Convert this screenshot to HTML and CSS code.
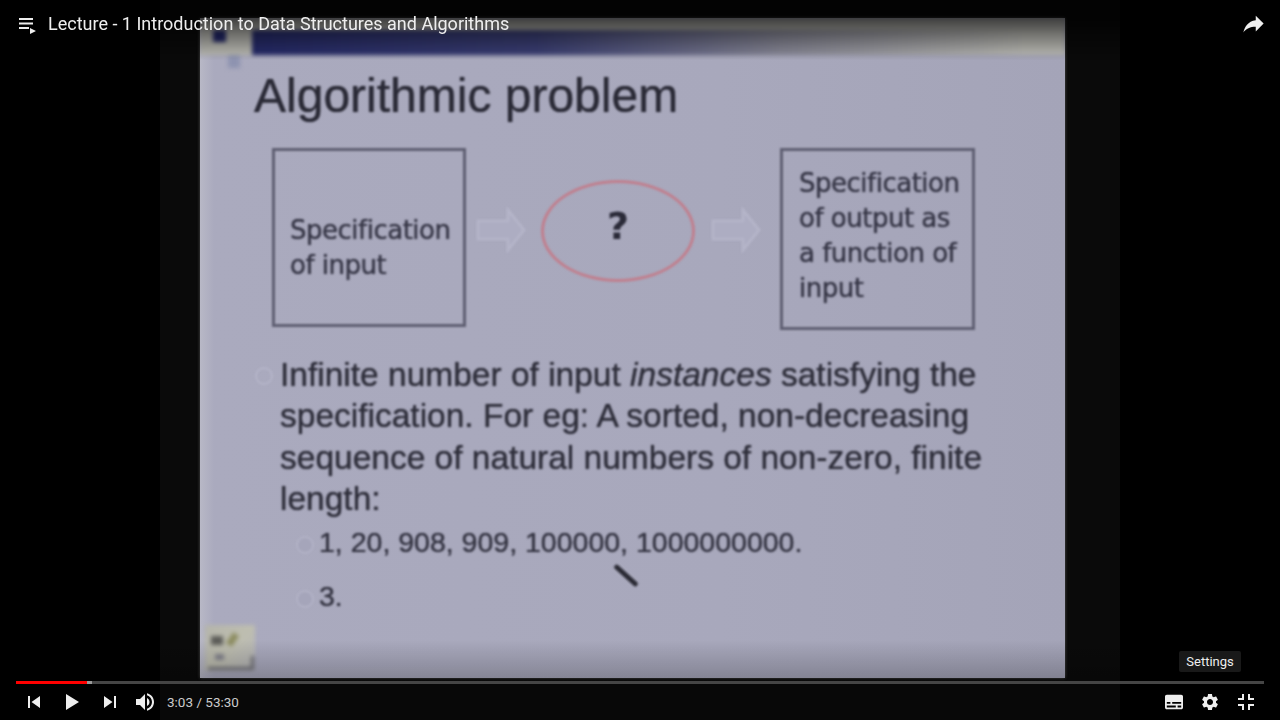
FILE: index.html
```html
<!DOCTYPE html>
<html>
<head>
    <title>Lecture - 1 Introduction to Data Structures and Algorithms</title>
    <link rel="stylesheet" href="styles.css">
</head>
<body>
    <div class="player">
        <div class="videoFrame">
            <div class="slide">
                <div class="slideHeader">
                    <span class="headerSquare"></span>
                    <span class="headerBand"></span>
                    <span class="headerDot"></span>
                </div>
                <div class="slideInner">
                    <h1 class="slideTitle">Algorithmic problem</h1>
                    <div class="diagram">
                        <div class="specBox inputBox">Specification<br>of input</div>
                        <svg class="hollowArrow" viewBox="0 0 50 46"><path d="M2 14h30V3l16 20-16 20V32H2z"/></svg>
                        <div class="oval"><span class="ovalMark">?</span></div>
                        <svg class="hollowArrow" viewBox="0 0 50 46"><path d="M2 14h30V3l16 20-16 20V32H2z"/></svg>
                        <div class="specBox outputBox">Specification<br>of output as<br>a function of<br>input</div>
                    </div>
                    <div class="point">
                        <span class="bullet"></span>
                        <p>Infinite number of input <em>instances</em> satisfying the<br>specification. For eg: A sorted, non-decreasing<br>sequence of natural numbers of non-zero, finite<br>length:</p>
                    </div>
                    <div class="subPoint firstSub"><span class="subBullet"></span><p>1, 20, 908, 909, 100000, 1000000000.</p></div>
                    <div class="subPoint"><span class="subBullet"></span><p>3.</p></div>
                </div>
                <div class="slideLogo">
                    <span class="logoDark"></span>
                    <span class="logoLeaf"></span>
                    <span class="logoSpot"></span>
                    <span class="logoFoot"></span>
                </div>
                <span class="penTip"></span>
            </div>
        </div>

        <div class="shadeTop"></div>
        <div class="shadeBottom"></div>

        <div class="topBar">
            <svg class="playlistIcon" viewBox="0 0 18 16"><path d="M0 0h14v2H0zM0 4.500h14v2H0zM0 9h10v2H0zM11 10l6 3-6 3z"/></svg>
            <span class="videoTitle">Lecture - 1 Introduction to Data Structures and Algorithms</span>
            <svg class="shareIcon" viewBox="0 0 24 24"><path d="M14 9V5l7 7-7 7v-4.100c-5 0-8.500 1.600-11 5.100 1-5 4-10 11-11z"/></svg>
        </div>

        <div class="tooltip">Settings</div>

        <div class="controls">
            <div class="progress">
                <div class="progressPlayed"></div>
                <div class="progressLoaded"></div>
            </div>
            <div class="controlRow">
                <div class="transport">
                    <svg class="ctrl" viewBox="0 0 36 36"><path d="M12 12h2v12h-2zM15.500 18l8.500 6V12z"/></svg>
                    <svg class="ctrl" viewBox="0 0 36 36"><path d="M12 26l6.500-4V14L12 10zM18.500 22L25 18l-6.500-4z"/></svg>
                    <svg class="ctrl" viewBox="0 0 36 36"><path d="M12 24l8.500-6L12 12zM22 12v12h2V12z"/></svg>
                </div>
                <svg class="ctrl" viewBox="0 0 36 36"><path d="M8 21h4l5 5V10l-5 5H8zM19 14v8c1.480-.680 2.500-2.230 2.500-4 0-1.740-1.020-3.260-2.500-4z"/><path d="M19 11.290c2.890.860 5 3.540 5 6.710s-2.110 5.850-5 6.710v2.060c4.010-.910 7-4.490 7-8.770s-2.990-7.860-7-8.770z"/></svg>
                <span class="timeText">3:03 / 53:30</span>
                <span class="spacer"></span>
                <svg class="ctrl" viewBox="-8 -8 40 40"><path d="M20 4H4c-1.100 0-2 .9-2 2v12c0 1.100.9 2 2 2h16c1.100 0 2-.9 2-2V6c0-1.100-.9-2-2-2zM4 12h4v2H4zm10 6H4v-2h10zm6 0h-4v-2h4zm0-4H10v-2h10z"/></svg>
                <svg class="ctrl" viewBox="-9.500 -9.500 43 43"><path d="M19.140 12.940c.04-.3.06-.61.06-.94 0-.32-.02-.64-.07-.94l2.030-1.580c.18-.14.23-.41.12-.61l-1.920-3.320c-.12-.22-.37-.29-.59-.22l-2.390.96c-.5-.38-1.030-.7-1.620-.94l-.36-2.540c-.04-.24-.24-.41-.48-.41h-3.840c-.24 0-.43.17-.47.41l-.36 2.540c-.59.24-1.130.57-1.620.94l-2.390-.96c-.22-.08-.47 0-.59.22L2.740 8.870c-.12.21-.08.47.12.61l2.030 1.580c-.05.3-.09.63-.09.94s.02.64.07.94l-2.030 1.580c-.18.14-.23.41-.12.61l1.920 3.320c.12.22.37.29.59.22l2.390-.96c.5.38 1.030.7 1.620.94l.36 2.540c.05.24.24.41.48.41h3.840c.24 0 .44-.17.47-.41l.36-2.540c.59-.24 1.130-.56 1.620-.94l2.390.96c.22.08.47 0 .59-.22l1.920-3.320c.12-.22.07-.47-.12-.61l-2.010-1.580zM12 15.600c-1.980 0-3.600-1.620-3.600-3.600s1.620-3.600 3.600-3.600 3.600 1.620 3.600 3.600-1.620 3.600-3.600 3.600z"/></svg>
                <svg class="ctrl" viewBox="0 0 36 36"><path d="M14 14h-4v2h6v-6h-2zM22 14v-4h-2v6h6v-2zM20 26h2v-4h4v-2h-6zM10 22h4v4h2v-6h-6z"/></svg>
            </div>
        </div>
    </div>
</body>
</html>
```
FILE: styles.css
```css
html, body {
    margin: 0;
    padding: 0;
    background-color: #000;
}
.player {
    position: relative;
    width: 1280px;
    height: 720px;
    overflow: hidden;
    background-color: #000;
    font-family: Roboto, "Liberation Sans", sans-serif;
}
.videoFrame {
    width: 960px;
    height: 720px;
    margin: 0 auto;
    padding: 18px 0 0 40px;
    box-sizing: border-box;
    background-color: #0a0a0a;
}

/* the slide */
.slide {
    position: relative;
    width: 865px;
    height: 660px;
    overflow: hidden;
    background: linear-gradient(90deg, #b8b8c6 0, #aaaabe 14px, #a8a8bc 60%, #a4a4b8 100%);
    box-shadow: 0 0 3px #555;
    font-family: "Liberation Sans", sans-serif;
    color: #2e2e3a;
}
.slideHeader {
    height: 37px;
    display: flex;
    filter: blur(2px);
    background: linear-gradient(180deg, #b4b4b0 0, #c0c0b8 100%);
}
.headerSquare {
    width: 13px;
    height: 12px;
    margin: 12px 0 0 13px;
    background-color: #23286a;
}
.headerBand {
    flex: 1;
    height: 25px;
    margin: 12px 0 0 26px;
    background: linear-gradient(90deg, #272c6c 0, #3d4178 35%, #8d8d9c 65%, #c0c0ba 95%);
}
.headerDot {
    position: absolute;
    left: 28px;
    top: 37px;
    width: 12px;
    height: 13px;
    background-color: #8e93b0;
}
.slideInner {
    filter: blur(1.2px);
    padding-left: 54px;
}
.slideTitle {
    margin: 10px 0 0 0;
    font-size: 48px;
    font-weight: normal;
    line-height: 62px;
    color: #2a2a36;
    text-shadow: 0 0 1px #2a2a36;
}
.diagram {
    display: flex;
    align-items: flex-start;
    margin: 21px 0 0 18px;
}
.specBox {
    box-sizing: border-box;
    width: 194px;
    border: 3px solid #5f5f72;
    font-family: "DejaVu Sans", sans-serif;
    font-size: 26px;
    letter-spacing: -.5px;
    line-height: 35px;
    color: #363646;
    text-shadow: 0 0 1px #363646;
}
.inputBox {
    height: 179px;
    padding: 62px 0 0 15px;
}
.outputBox {
    width: 195px;
    height: 182px;
    padding: 15px 0 0 16px;
}
.hollowArrow {
    width: 50px;
    height: 46px;
    margin: 59px 0 0 10px;
    fill: #adadc2;
    stroke: #b4b4c8;
    stroke-width: 3;
}
.oval {
    box-sizing: border-box;
    width: 154px;
    height: 102px;
    margin: 32px 0 0 15px;
    border: 3px solid #c07f8e;
    border-radius: 50%;
    display: flex;
    align-items: center;
    justify-content: center;
}
.ovalMark {
    padding-bottom: 10px;
    font-family: "DejaVu Sans", sans-serif;
    font-size: 38px;
    font-weight: bold;
    color: #2a2a38;
}
.oval + .hollowArrow {
    margin-left: 16px;
    margin-right: 19px;
}
.point {
    display: flex;
    margin: 24px 0 0 0;
}
.point p {
    margin: 0;
    font-size: 33.5px;
    line-height: 41.4px;
    text-shadow: 0 0 1px #2e2e3a;
}
.bullet {
    width: 18px;
    height: 18px;
    margin: 13px 7px 0 1px;
    border: 2px solid #b4b4c8;
    border-radius: 50%;
    box-sizing: border-box;
}
.subPoint {
    display: flex;
    align-items: center;
    margin-left: 42px;
    font-size: 28.5px;
    height: 36px;
    color: #343442;
    text-shadow: 0 0 1px #343442;
}
.subPoint p {
    margin: 0;
}
.firstSub {
    margin-top: 5px;
    margin-bottom: 18px;
}
.subBullet {
    width: 18px;
    height: 18px;
    margin: 4px 5px 0 0;
    border-radius: 50%;
    background-color: #a5a5ba;
    border: 2px solid #b2b2c6;
    box-sizing: border-box;
}
.slideLogo {
    position: absolute;
    left: 5px;
    top: 607px;
    width: 50px;
    height: 46px;
    filter: blur(2px);
    background: linear-gradient(135deg, #b4b4aa, #bebeb0 50%, #b4b4b8);
}
.logoDark {
    position: absolute;
    left: 6px;
    top: 11px;
    width: 12px;
    height: 9px;
    background-color: #5c5c58;
}
.logoLeaf {
    position: absolute;
    left: 24px;
    top: 8px;
    width: 7px;
    height: 13px;
    background-color: #8c8c60;
    transform: rotate(35deg);
}
.logoSpot {
    position: absolute;
    left: 10px;
    top: 29px;
    width: 9px;
    height: 6px;
    background-color: #80808a;
}
.logoFoot {
    position: absolute;
    left: 3px;
    bottom: 1px;
    width: 46px;
    height: 14px;
    box-sizing: border-box;
    border-right: 3px solid #6c6c74;
    border-bottom: 3px solid #6c6c74;
}
.penTip {
    position: absolute;
    left: 411px;
    top: 555px;
    width: 30px;
    height: 5px;
    border-radius: 3px;
    background-color: #2c2c36;
    transform: rotate(42deg);
    filter: blur(1px);
}

/* player chrome */
.shadeTop {
    position: absolute;
    left: 0;
    right: 0;
    top: 0;
    height: 60px;
    background: linear-gradient(180deg, rgba(0, 0, 0, .65) 30%, rgba(0, 0, 0, 0) 100%);
}
.shadeBottom {
    position: absolute;
    left: 0;
    right: 0;
    bottom: 0;
    height: 80px;
    background: linear-gradient(0deg, rgba(0, 0, 0, .22) 50%, rgba(0, 0, 0, 0) 100%);
}
.topBar {
    position: absolute;
    left: 0;
    right: 0;
    top: 0;
    height: 47px;
    display: flex;
    align-items: center;
    padding: 0 13px 0 19px;
}
.playlistIcon {
    width: 18px;
    height: 16px;
    margin: 5px 11px 0 0;
    fill: #eee;
}
.videoTitle {
    flex: 1;
    font-size: 18px;
    color: #eee;
}
.shareIcon {
    width: 27px;
    height: 27px;
    fill: #eee;
}
.tooltip {
    position: absolute;
    left: 1179px;
    top: 651px;
    width: 62px;
    height: 21px;
    line-height: 21px;
    text-align: center;
    font-size: 13px;
    color: #eee;
    background-color: rgba(28, 28, 28, .9);
    border-radius: 2px;
}
.controls {
    position: absolute;
    left: 16px;
    right: 16px;
    bottom: 0;
}
.progress {
    display: flex;
    height: 3px;
    background-color: #454545;
}
.progressPlayed {
    width: 71px;
    background-color: #f00;
}
.progressLoaded {
    width: 5px;
    background-color: #999;
}
.controlRow {
    display: flex;
    align-items: center;
    height: 36px;
}
.transport {
    display: flex;
    gap: 2px;
}
.ctrl {
    width: 36px;
    height: 36px;
    fill: #eee;
}
.timeText {
    margin-left: 3px;
    font-size: 13.5px;
    color: #ccc;
}
.spacer {
    flex: 1;
}
```
